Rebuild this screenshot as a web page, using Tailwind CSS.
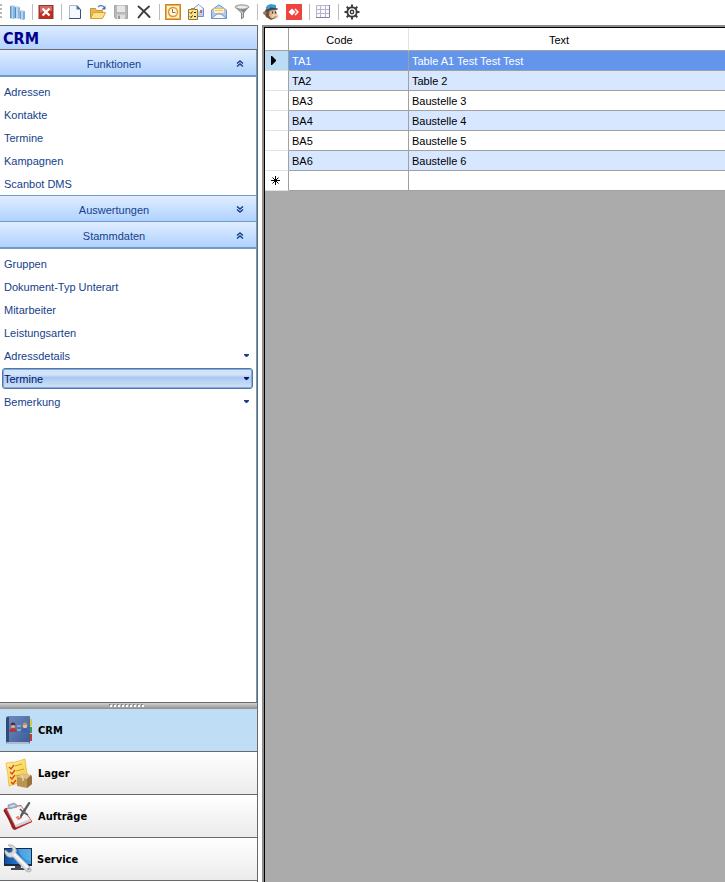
<!DOCTYPE html>
<html lang="de">
<head>
    <meta charset="UTF-8">
    <meta name="viewport" content="width=device-width, initial-scale=1.0">
    <title>CRM</title>
    <script src="https://cdn.jsdelivr.net/npm/@tailwindcss/browser@4"></script>
</head>
<body class="flex h-screen flex-col overflow-hidden bg-white font-['Liberation_Sans',Arial,sans-serif] text-[11px] leading-4 text-black">

    <!-- Toolbar -->
    <header class="flex h-[25px] shrink-0 items-center pb-px">
        <svg class="mr-1 h-5 w-[2px]" viewBox="0 0 2 20" fill="#b8b8b8"><path d="M0 2h2v2H0zM0 6h2v2H0zM0 10h2v2H0zM0 14h2v2H0z"/></svg>
        <button type="button" title="Auswertung" class="w-[23px] pl-[3px]">
            <svg class="size-4" viewBox="0 0 16 16">
                <path d="M1 2l2-1 3 1v12l-2 1-3-1z" fill="#b3d3ee"/><path d="M1 2l1.500.500v12L1 14z" fill="#5a96c6"/><path d="M4 3l2-1v12l-2 1z" fill="#86b4db"/>
                <path d="M6 3l2-1 3 1v11l-2 1-3-1z" fill="#bdd9f1"/><path d="M6 3l1 .500v11L6 14z" fill="#4f8dbf"/><path d="M9 4l2-1v11l-2 1z" fill="#8fbae0"/>
                <path d="M11 7l2-1 3 1v8l-2 1-3-1z" fill="#b5d3ed"/><path d="M11 7l1 .500v8l-1-.500z" fill="#6fa3ce"/><path d="M14 8l2-1v8l-2 1z" fill="#7badd6"/>
            </svg>
        </button>
        <span class="mr-[2px] ml-[3px] h-4 border-l border-[#bdbdbd]"></span>
        <button type="button" title="Schließen" class="w-[23px] pl-[3px]">
            <svg class="size-4" viewBox="0 0 16 16">
                <rect x="1" y="1.500" width="14" height="13" fill="#c9281b" stroke="#8a3b33"/>
                <path d="M2 2h12v5Q8 6 2 9z" fill="#d9695e"/>
                <path d="M4.500 4.500l7 7M11.500 4.500l-7 7" stroke="#fff" stroke-width="2.400"/>
            </svg>
        </button>
        <span class="mr-[2px] ml-[3px] h-4 border-l border-[#bdbdbd]"></span>
        <button type="button" title="Neu" class="w-[23px] pl-[3px]">
            <svg class="size-4" viewBox="0 0 16 16">
                <path d="M2 1.500h8l3.500 4v9H2z" fill="#f3f8ff"/><path d="M2.500 14V1.500H10" fill="none" stroke="#a9bcd6"/>
                <path d="M9.500 1.500v4h4z" fill="#5d7193"/><path d="M10 1.500l3.500 4v9H2" fill="none" stroke="#3a5078"/>
            </svg>
        </button>
        <button type="button" title="Öffnen" class="w-[23px] pl-[3px]">
            <svg class="size-4" viewBox="0 0 16 16">
                <path d="M.500 14.500V4.500h5l1 2h6v3" fill="#eab64e" stroke="#c8953a"/>
                <path d="M.500 14.500l3-6h12l-3 6z" fill="#ffe08a" stroke="#d3a040"/>
                <path d="M8 3q3-3 6 0" fill="none" stroke="#6482ae" stroke-width="1.200"/><path d="M15.500 1.500v4h-4z" fill="#4d6c9a"/>
            </svg>
        </button>
        <button type="button" title="Speichern" class="w-[23px] pl-[3px]">
            <svg class="size-4" viewBox="0 0 16 16">
                <path d="M1.500 1.500h13v13h-12l-1-1z" fill="#b8b8b8" stroke="#a6a6a6"/>
                <path d="M4 1.500h8V8H4z" fill="#e6e6e6"/><path d="M4 10.500h8V15H4z" fill="#dedede"/><path d="M5 11.500h2V15H5z" fill="#999"/>
            </svg>
        </button>
        <button type="button" title="Löschen" class="w-[23px] pl-[3px]">
            <svg class="size-4" viewBox="0 0 16 16"><path d="M2.500 2.500Q7 6 13.500 13M13 2.500Q7 7 2.500 13.500" fill="none" stroke="#3c3c3c" stroke-width="1.900" stroke-linecap="round"/></svg>
        </button>
        <span class="mr-[2px] ml-[3px] h-4 border-l border-[#bdbdbd]"></span>
        <button type="button" title="Termine" class="w-[23px] pl-[3px]">
            <svg class="size-4" viewBox="0 0 16 16">
                <rect x=".500" y=".500" width="15" height="15" fill="#fff1cd" stroke="#cc8421"/>
                <rect x="1.500" y="1.500" width="13" height="13" fill="none" stroke="#f0b24c"/>
                <circle cx="8" cy="8" r="4.500" fill="#fff7e3" stroke="#d9993d" stroke-width="1.500"/>
                <path d="M7.500 5v3.500h3" fill="none" stroke="#a96e22"/>
            </svg>
        </button>
        <button type="button" title="Aufgaben" class="w-[23px] pl-[3px]">
            <svg class="size-4" viewBox="0 0 16 16">
                <path d="M5.500 4.500l5-4 5 4v8h-10z" fill="#dceafd" stroke="#6d91c3"/>
                <path d="M7 4l4-3 3 3v4H7z" fill="#f3f6fb"/><path d="M9 8l6-3v7H9z" fill="#b7d1f4"/><path d="M12 6h2v3h-2z" fill="#df6845"/>
                <path d="M.500 5.500h9v10h-9z" fill="#ffe38a" stroke="#8f7939"/><path d="M3 4h4v2H3z" fill="#a98c3b"/>
                <path d="M2 8.500l1 1 1.500-2M2 12.500l1 1 1.500-2M6 8.500h2M6 12.500h2" fill="none" stroke="#27231a"/>
            </svg>
        </button>
        <button type="button" title="E-Mail" class="w-[23px] pl-[3px]">
            <svg class="size-4" viewBox="0 0 16 16">
                <path d="M.500 6L8 .800 15.500 6v8.500H.500z" fill="#bcd5f6" stroke="#6f93c9"/>
                <path d="M2.500 4.500h11v5h-11z" fill="#fff0c7" stroke="#e6bc70"/><path d="M4 6.500h8" stroke="#efc87f"/>
                <path d="M1 7l5 3h4l5-3v7H1z" fill="#a9c9f4"/><path d="M1 14l5-4h4l5 4" fill="#f4f8ff" stroke="#7196cf"/>
            </svg>
        </button>
        <button type="button" title="Filter" class="w-[23px] pl-[3px]">
            <svg class="size-4" viewBox="0 0 16 16">
                <path d="M1 3l6 6v6.500l3-2V9l5-6z" fill="#858585"/>
                <path d="M4 5l4 4v5l1-1V8z" fill="#d0d0d0"/><ellipse cx="8" cy="3" rx="7" ry="2.200" fill="#d2d2d2" stroke="#8c8c8c" stroke-width=".800"/><ellipse cx="8" cy="3.300" rx="4.500" ry="1" fill="#f1f1f1"/>
            </svg>
        </button>
        <span class="mr-[2px] ml-[3px] h-4 border-l border-[#bdbdbd]"></span>
        <button type="button" title="Newsletter" class="w-[23px] pl-[3px]">
            <svg class="size-4" viewBox="0 0 16 16">
                <path d="M3 5h9l2 5-1 4-5 2-5-3-2-4z" fill="#74503c"/><circle cx="1.800" cy="9" r="1.800" fill="#9c735d"/>
                <path d="M6.500 7l6-1.500 1.500 5-1 3-5 1-2-3z" fill="#d9b08c"/><ellipse cx="12" cy="12" rx="3.500" ry="2.500" fill="#ecd0b2"/>
                <path d="M3 6Q2 1 8 0l5 1v4l-5-1z" fill="#3d9cc8"/><path d="M3 6l5-2.500 7 1-1 1.500-5-1-6 2.500z" fill="#33465c"/>
                <path d="M9 7.500h1v2H9zM12 7.500h1v2h-1zM10 13q2 1 4-.500" fill="#4b3227"/>
            </svg>
        </button>
        <button type="button" title="AnyDesk" class="w-[23px] pl-[3px]">
            <svg class="size-4" viewBox="0 0 16 16"><path d="M0 0h16v16H0z" fill="#ef443b"/><path d="M6 4.500L9.500 8 6 11.500 2.500 8z" fill="#fff"/><path d="M8.500 5.500l1-1L13 8l-3.500 3.500-1-1L11 8z" fill="#fff"/></svg>
        </button>
        <span class="mr-[2px] ml-[3px] h-4 border-l border-[#bdbdbd]"></span>
        <button type="button" title="Tabelle" class="w-[23px] pl-[3px]">
            <svg class="size-4" viewBox="0 0 16 16"><path d="M1.500 1.500h13v12h-13z" fill="#fafafe"/><path d="M1.500 1.500h13M1.500 5.500h13M1.500 9.500h13M1.500 1.500v12M5.500 1.500v12M10.500 1.500v12" stroke="#b5b5cf"/><path d="M14.500 1v12.500H1" fill="none" stroke="#8383a0"/></svg>
        </button>
        <span class="mr-[2px] ml-[3px] h-4 border-l border-[#bdbdbd]"></span>
        <button type="button" title="Einstellungen" class="w-[23px] pl-[3px]">
            <svg class="size-4" viewBox="0 0 16 16" fill="none" stroke="#3c3c3c">
                <circle cx="8" cy="8" r="4.700" stroke-width="1.900"/><circle cx="8" cy="8" r="1.700" stroke-width="1.400"/>
                <path d="M8 .500v3M8 12.500v3M.500 8h3M12.500 8h3M2.700 2.700l2.100 2.100M11.200 11.200l2.100 2.100M13.300 2.700l-2.100 2.100M4.800 11.200l-2.100 2.100" stroke-width="2"/>
            </svg>
        </button>
    </header>

    <div class="flex min-h-0 flex-1">

        <!-- Sidebar -->
        <aside class="flex w-[258px] shrink-0 flex-col border-r border-[#696969]">
            <h1 class="h-[25px] shrink-0 border-y border-[#696969] bg-linear-to-b from-[#dcebff] to-[#b3d3ff] pt-px pl-[3px] font-['DejaVu_Sans_Condensed','DejaVu_Sans',sans-serif] text-base leading-6 font-bold text-[#00008b]">CRM</h1>

            <div class="flex flex-1 flex-col border-r border-[#6d9bc9] text-[#15428b]">
                <button type="button" class="flex h-[27px] items-center border-b-2 border-[#6f9acb] bg-linear-to-b from-[#e0edff] to-[#b0d2ff] pt-[2px] pr-3">
                    <span class="flex-1 pr-2 text-center">Funktionen</span>
                    <svg class="size-2" viewBox="0 0 8 8" fill="none" stroke="#15428b" stroke-width="1.500"><path d="M1 3.500l3-2.500 3 2.500M1 6.500L4 4l3 2.500"/></svg>
                </button>
                <ul class="pt-[3px]">
                    <li><a href="#" class="flex h-[23px] items-center pl-1">Adressen</a></li>
                    <li><a href="#" class="flex h-[23px] items-center pl-1">Kontakte</a></li>
                    <li><a href="#" class="flex h-[23px] items-center pl-1">Termine</a></li>
                    <li><a href="#" class="flex h-[23px] items-center pl-1">Kampagnen</a></li>
                    <li><a href="#" class="flex h-[23px] items-center pl-1">Scanbot DMS</a></li>
                </ul>
                <button type="button" class="flex h-[27px] items-center border-y border-[#6f9acb] bg-linear-to-b from-[#e0edff] to-[#b0d2ff] pt-[2px] pr-3">
                    <span class="flex-1 pr-2 text-center">Auswertungen</span>
                    <svg class="size-2" viewBox="0 0 8 8" fill="none" stroke="#15428b" stroke-width="1.500"><path d="M1 .500L4 3 7 .500M1 3.500L4 6l3-2.500"/></svg>
                </button>
                <button type="button" class="flex h-[27px] items-center border-b-2 border-[#6f9acb] bg-linear-to-b from-[#e0edff] to-[#b0d2ff] pt-[2px] pr-3">
                    <span class="flex-1 pr-2 text-center">Stammdaten</span>
                    <svg class="size-2" viewBox="0 0 8 8" fill="none" stroke="#15428b" stroke-width="1.500"><path d="M1 3.500l3-2.500 3 2.500M1 6.500L4 4l3 2.500"/></svg>
                </button>
                <ul class="pt-[3px]">
                    <li><a href="#" class="flex h-[23px] items-center pl-1">Gruppen</a></li>
                    <li><a href="#" class="flex h-[23px] items-center pl-1">Dokument-Typ Unterart</a></li>
                    <li><a href="#" class="flex h-[23px] items-center pl-1">Mitarbeiter</a></li>
                    <li><a href="#" class="flex h-[23px] items-center pl-1">Leistungsarten</a></li>
                    <li><a href="#" class="flex h-[23px] items-center justify-between pr-[7px] pl-1">Adressdetails <svg class="h-[3px] w-[5px]" viewBox="0 0 5 3" fill="#15428b"><path d="M0 0h5v1L3 3H2L0 1z"/></svg></a></li>
                    <li class="py-px pr-[3px] pl-[2px]"><a href="#" class="flex h-[21px] items-center justify-between rounded-[3px] border border-[#4a78b0] bg-linear-to-b from-[#d3e3f8] from-30% via-[#a9c9f1] via-45% to-[#d3e3f8] pr-[3px] pl-px text-[#00156e] inset-ring inset-ring-[#86aadb]">Termine <svg class="h-[3px] w-[5px]" viewBox="0 0 5 3" fill="#00156e"><path d="M0 0h5v1L3 3H2L0 1z"/></svg></a></li>
                    <li><a href="#" class="flex h-[23px] items-center justify-between pr-[7px] pl-1">Bemerkung <svg class="h-[3px] w-[5px]" viewBox="0 0 5 3" fill="#15428b"><path d="M0 0h5v1L3 3H2L0 1z"/></svg></a></li>
                </ul>
            </div>

            <!-- Splitter grip -->
            <div class="flex h-[7px] shrink-0 justify-center border-t border-[#696969] bg-linear-to-b from-[#d2d2d2] to-[#8f8f8f] pt-px pr-1">
                <svg class="h-[3px] w-9" viewBox="0 0 36 3" fill="none"><path d="M0 1h36" stroke="#8a8a8a" stroke-width="2" stroke-dasharray="2 2"/><path d="M1 2h35" stroke="#fff" stroke-width="2" stroke-dasharray="2 2"/></svg>
            </div>

            <nav class="shrink-0 pb-px font-['DejaVu_Sans_Condensed','DejaVu_Sans',sans-serif] font-bold">
                <a href="#" class="flex h-[43px] items-center gap-1 border-b border-[#696969] bg-[#bfddf5] pl-[3px]">
                    <svg class="size-[31px]" viewBox="0 0 31 31">
                        <defs>
                            <linearGradient id="cover" x1="0" y1="0" x2="1" y2="1"><stop stop-color="#6d8dc0"/><stop offset=".5" stop-color="#5575ad"/><stop offset="1" stop-color="#3b588f"/></linearGradient>
                        </defs>
                        <path d="M26 4h3v7h-3z" fill="#d9c83a"/><path d="M26 12h3v6h-3z" fill="#3f9a4d"/><path d="M26 19h3v7h-3z" fill="#c43a34"/>
                        <path d="M5 1h21q1 0 1 1v25q0 2-2 2H5q-2 0-2-2V3q0-2 2-2z" fill="url(#cover)"/><path d="M4 2h2v25H4q-1 0-1-2V4z" fill="#304a7c"/><path d="M4 28h22" stroke="#aeb9cc" stroke-width="2"/>
                        <circle cx="10" cy="11" r="2.200" fill="#dca58c"/><path d="M7.500 10.500q0-3 2.500-3t2.500 3q-2-1-5 0z" fill="#4e2f33"/><path d="M6 17q1-4 4-4t4 4z" fill="#b03a37"/>
                        <circle cx="22" cy="11" r="2.200" fill="#e2c3a0"/><path d="M19.500 10.500q0-3 2.500-3t2.500 3q-2-1-5 0z" fill="#b59567"/><path d="M18 17q1-4 4-4t4 4z" fill="#3c62b0"/>
                        <path d="M14 11h4M14 15h4" stroke="#c2cfe5"/>
                    </svg>
                    <span class="pt-px">CRM</span>
                </a>
                <a href="#" class="flex h-[43px] items-center gap-1 border-b border-[#696969] bg-linear-to-b from-white to-[#ebebeb] pl-[3px]">
                    <svg class="size-[31px]" viewBox="0 0 31 31">
                        <defs>
                            <linearGradient id="note" x1="0" y1="0" x2="1" y2="1"><stop stop-color="#ffef92"/><stop offset="1" stop-color="#f6c534"/></linearGradient>
                        </defs>
                        <path d="M3 5q10 0 19-4 1 12 4 22-10 1-20 5Q5 15 3 5z" fill="url(#note)" stroke="#e0b43c" stroke-width=".700"/>
                        <path d="M12 8l7-2M13 13l8-2M13 18l8-2M14 23l6-1" stroke="#c69b3b"/>
                        <path d="M6 9l2 2 3-4M7 14l2 2 3-4M7 19l2 2 3-4M8 24l2 2 3-4" fill="none" stroke="#d2452c" stroke-width="1.300"/>
                        <path d="M14 19l5-3 9 1 1 3v6l-5 4-10-2z" fill="#bd9353"/><path d="M14 19l5-3 9 1-4 4z" fill="#ddc08a"/><path d="M24 21v9l5-4v-7l-1-2z" fill="#98733d"/><path d="M18 17l2 3v3" fill="none" stroke="#e9d3a6" stroke-width="1.500"/>
                    </svg>
                    <span class="pt-px">Lager</span>
                </a>
                <a href="#" class="flex h-[43px] items-center gap-1 border-b border-[#696969] bg-linear-to-b from-white to-[#ebebeb] pl-[3px]">
                    <svg class="size-[31px]" viewBox="0 0 31 31">
                        <path d="M1 8q1-1 3-1l14-3 11 16q0 2-2 2l-15 7q-2 0-3-2z" fill="#b82b2b"/><path d="M1 9l11 19" stroke="#7d2022" stroke-width="1.500"/>
                        <path d="M4 8l14-3 10 15-15 6z" fill="#f6f6f7" stroke="#c9c9cc" stroke-width=".700"/><path d="M12 24l15-6 1 2-15 6z" fill="#d2d3d6"/>
                        <path d="M5 7V4l6-2 3 2v2l-8 2z" fill="#a7b6c8" stroke="#8393a5" stroke-width=".700"/><path d="M7 5l4-1 1 1-4 1z" fill="#e4edf5"/>
                        <path d="M26 1l1 1-8 13-2 2 1-4z" fill="#5b5b5d" stroke="#49494b" stroke-width=".700"/><path d="M17 8q3 4 8 6" fill="none" stroke="#5b5b5d" stroke-width="1.500"/><path d="M13 17q3-3 2 0t4-1" fill="none" stroke="#e46262" stroke-width="1.200"/>
                    </svg>
                    <span class="pt-px">Aufträge</span>
                </a>
                <a href="#" class="flex h-[43px] items-center gap-1 border-b border-[#696969] bg-linear-to-b from-white to-[#ebebeb] pl-[3px]">
                    <svg class="size-[30px]" viewBox="0 0 30 30">
                        <defs>
                            <linearGradient id="screen" x1="0" y1="0" x2="1" y2="0"><stop stop-color="#0d4fa8"/><stop offset="1" stop-color="#3fa4ea"/></linearGradient>
                        </defs>
                        <path d="M1 4h28v18H1z" fill="#1d2a3b"/><path d="M2 5h26v15H2z" fill="url(#screen)"/><path d="M15 5h13v12Q18 16 15 5z" fill="#6fbdf2" opacity=".5"/><path d="M12 22h6v2h4v2H8v-2h4z" fill="#454b52"/>
                        <path d="M5 1q4-1 7 2 2 3 1 6l13 13q3 3 2 5-2 2-5 0L10 13q-4 1-6-1-3-3-2-6l4 3 3-1 1-3z" fill="#d9dbde" stroke="#a4a9af" stroke-width=".800"/><path d="M11 10l14 14" stroke="#f7f8f9" stroke-width="2"/><circle cx="25.500" cy="25" r="1.200" fill="#8a9198"/>
                    </svg>
                    <span class="pt-px">Service</span>
                </a>
            </nav>
        </aside>

        <!-- Data grid -->
        <main class="ml-1 flex-1 overflow-hidden border-t-2 border-l-2 border-[#8c8c8c]">
            <div class="h-full border-t border-l border-black bg-[#ababab]">
                <table class="w-full table-fixed border-separate border-spacing-0 bg-white">
                    <colgroup><col class="w-6"><col class="w-[120px]"><col></colgroup>
                    <thead>
                        <tr class="h-[23px]">
                            <th class="border-r border-b border-[#a0a0a0] p-0"></th>
                            <th class="border-r border-b border-r-[#e2e2e2] border-b-[#a0a0a0] p-0 pt-[2px] pr-[18px] font-normal">Code</th>
                            <th class="border-b border-[#a0a0a0] p-0 pt-[2px] pr-4 font-normal">Text</th>
                        </tr>
                    </thead>
                    <tbody>
                        <tr class="h-5 bg-[#6495ed] text-white">
                            <td class="border-r border-b border-r-[#a0a0a0] border-b-[#e2e2e2] bg-[#bcdcf4] p-0 pl-[6px]"><svg class="h-[9px] w-[5px]" viewBox="0 0 5 9"><path d="M0 0h1l4 4v1L1 9H0z"/></svg></td>
                            <td class="border-r border-b border-[#a0a0a0] p-0 pl-[3px]">TA1</td>
                            <td class="border-b border-[#a0a0a0] p-0 pl-[3px]">Table A1 Test Test Test</td>
                        </tr>
                        <tr class="h-5 bg-[#d7e7ff]">
                            <td class="border-r border-b border-r-[#a0a0a0] border-b-[#e2e2e2] bg-white p-0"></td>
                            <td class="border-r border-b border-[#a0a0a0] p-0 pl-[3px]">TA2</td>
                            <td class="border-b border-[#a0a0a0] p-0 pl-[3px]">Table 2</td>
                        </tr>
                        <tr class="h-5">
                            <td class="border-r border-b border-r-[#a0a0a0] border-b-[#e2e2e2] p-0"></td>
                            <td class="border-r border-b border-[#a0a0a0] p-0 pl-[3px]">BA3</td>
                            <td class="border-b border-[#a0a0a0] p-0 pl-[3px]">Baustelle 3</td>
                        </tr>
                        <tr class="h-5 bg-[#d7e7ff]">
                            <td class="border-r border-b border-r-[#a0a0a0] border-b-[#e2e2e2] bg-white p-0"></td>
                            <td class="border-r border-b border-[#a0a0a0] p-0 pl-[3px]">BA4</td>
                            <td class="border-b border-[#a0a0a0] p-0 pl-[3px]">Baustelle 4</td>
                        </tr>
                        <tr class="h-5">
                            <td class="border-r border-b border-r-[#a0a0a0] border-b-[#e2e2e2] p-0"></td>
                            <td class="border-r border-b border-[#a0a0a0] p-0 pl-[3px]">BA5</td>
                            <td class="border-b border-[#a0a0a0] p-0 pl-[3px]">Baustelle 5</td>
                        </tr>
                        <tr class="h-5 bg-[#d7e7ff]">
                            <td class="border-r border-b border-r-[#a0a0a0] border-b-[#e2e2e2] bg-white p-0"></td>
                            <td class="border-r border-b border-[#a0a0a0] p-0 pl-[3px]">BA6</td>
                            <td class="border-b border-[#a0a0a0] p-0 pl-[3px]">Baustelle 6</td>
                        </tr>
                        <tr class="h-5">
                            <td class="border-r border-b border-r-[#a0a0a0] border-b-[#e2e2e2] p-0 pl-[6px]"><svg class="size-[9px]" viewBox="0 0 9 9" stroke="#000"><path d="M4.500 0v9M0 4.500h9M1.500 1.500l6 6M7.500 1.500l-6 6"/></svg></td>
                            <td class="border-r border-b border-[#a0a0a0] p-0"></td>
                            <td class="border-b border-[#a0a0a0] p-0"></td>
                        </tr>
                    </tbody>
                </table>
            </div>
        </main>
    </div>

</body>
</html>
